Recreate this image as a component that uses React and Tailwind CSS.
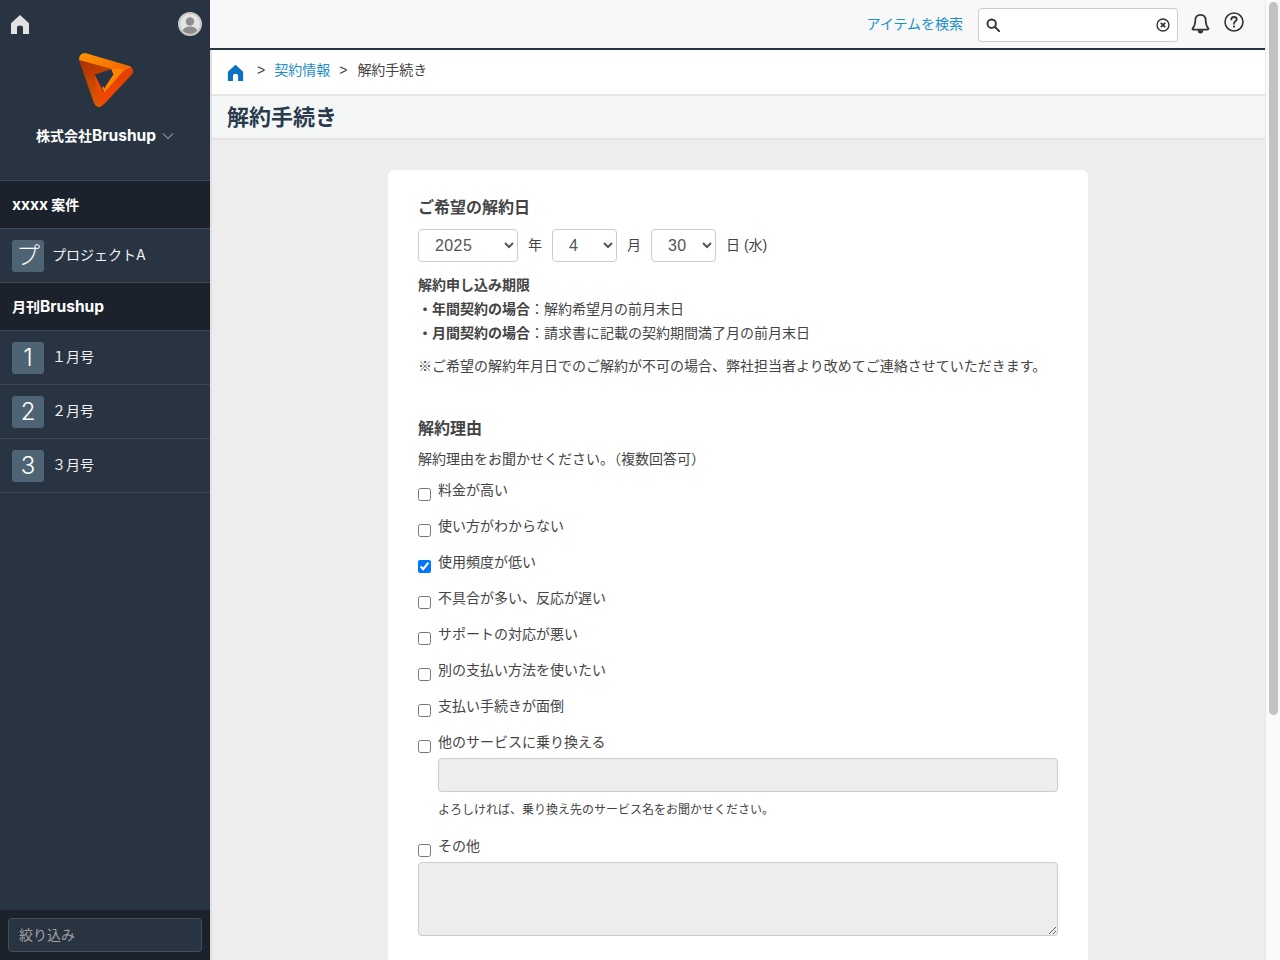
import React from "react";

const font = { fontFamily: '"Liberation Sans","Noto Sans CJK JP",sans-serif' };
const sideFont = { fontFamily: 'Inter,"Noto Sans CJK JP",sans-serif' };

function Home({ className }) {
  return (
    <svg viewBox="0 0 20 20" className={className} fill="currentColor">
      <path d="M10 1 L19 9.2 V20 H13 V13.5 Q13 11.5 10 11.5 Q7 11.5 7 13.5 V20 H1 V9.2 Z" />
    </svg>
  );
}

function Logo() {
  return (
    <svg viewBox="0 0 192 192" className="w-[64px] h-[64px]">
      <defs>
        <linearGradient id="a" x1="0" y1="0" x2="1" y2="0.3">
          <stop offset="0" stopColor="#ff9400" />
          <stop offset="1" stopColor="#f56a00" />
        </linearGradient>
        <linearGradient id="b" x1="0.2" y1="0" x2="0.5" y2="1">
          <stop offset="0" stopColor="#b23000" />
          <stop offset="1" stopColor="#dc5c00" />
        </linearGradient>
        <linearGradient id="c" x1="1" y1="0" x2="0" y2="1">
          <stop offset="0" stopColor="#e23c00" />
          <stop offset="1" stopColor="#f24c00" />
        </linearGradient>
      </defs>
      <g transform="matrix(1.052 0 0 1.11 -4 -6)">
        <path d="M62 76 L88 125 L150 62 L165 56 Q178 66 170 76 L92 155 Q78 170 66 160 Z" fill="url(#c)" />
        <path d="M18 38 L110 62 L62 78 L80 164 Q66 168 60 152 Z" fill="url(#b)" />
        <path d="M18 38 Q18 19 36 19 L162 54 Q168 56 166 59 L150 64 L110 62 Z" fill="url(#a)" />
        <path d="M110 62 L150 62 L90 126 L84 113 L116 77 Z" fill="#ff8400" />
        <path d="M116 77 L80 88 L90 115 Z" fill="#293442" />
      </g>
    </svg>
  );
}

function SectionRow({ children }) {
  return (
    <div className="h-[48px] flex items-center pl-3 bg-[#1c222c] border-t border-[#3c4855] text-white text-[14px] font-bold" style={sideFont}>
      {children}
    </div>
  );
}

function NavRow({ glyph, label }) {
  return (
    <div className="h-[54px] flex items-center pl-3 gap-[8px] border-t border-[#3c4855] text-[#f2f2f2] text-[14px]" style={sideFont}>
      <span className="w-[32px] h-[32px] rounded-[3px] bg-[#4e6373] text-white text-[24px] leading-[32px] text-center font-light">{glyph}</span>
      <span className="mb-[2px]">{label}</span>
    </div>
  );
}

function Sel({ value, w }) {
  return (
    <select
      defaultValue={value}
      className={`${w} h-[33px] pl-[12px] bg-white border border-[#ccc] rounded-[4px] text-[16px] tracking-[0.4px] text-[#555] pb-[1px]`}
    >
      <option>{value}</option>
    </select>
  );
}

function Check({ label, checked }) {
  return (
    <label className="flex items-start gap-[7px] h-[36px] text-[14px] leading-[20px] text-[#444]">
      <input type="checkbox" defaultChecked={checked} className="w-[13px] h-[13px] mt-[8px] ml-0 shrink-0" />
      <span>{label}</span>
    </label>
  );
}

export default function App() {
  return (
    <div className="flex w-[1280px] h-[960px] overflow-hidden bg-[#ededed]" style={font}>
      <aside className="w-[210px] shrink-0 h-full flex flex-col bg-[#293442]">
        <div className="h-[180px] shrink-0 relative flex flex-col items-center">
          <div className="w-full flex items-center justify-between pl-[10px] pr-[8px] h-[48px] text-[#e2e2e2]">
            <Home className="w-[20px] h-[20px]" />
            <span className="w-[24px] h-[24px] rounded-full border-2 border-[#c8c8c8] bg-[#e4e4e4] overflow-hidden flex items-center justify-center">
              <svg viewBox="0 0 20 20" className="w-[20px] h-[20px]" fill="#8e8e8e">
                <circle cx="10" cy="7.5" r="4.2" />
                <path d="M2 20 Q2 12.5 10 12.5 Q18 12.5 18 20 Z" />
              </svg>
            </span>
          </div>
          <div className="ml-[2px]"><Logo /></div>
          <div className="mt-[14px] flex items-center gap-[6px] text-white text-[14px] font-bold leading-[20px]" style={sideFont}>
            <span>株式会社<span className="text-[15.5px]">Brushup</span></span>
            <svg viewBox="0 0 12 8" className="w-[12px] h-[8px]" fill="none" stroke="#c8ccd0" strokeWidth="1">
              <path d="M1 1.5 L6 6.5 L11 1.5" />
            </svg>
          </div>
        </div>
        <SectionRow><span><span className="text-[15.5px]">xxxx</span> 案件</span></SectionRow>
        <NavRow glyph="プ" label="プロジェクトA" />
        <SectionRow><span>月刊<span className="text-[15.5px]">Brushup</span></span></SectionRow>
        <NavRow glyph="1" label="１月号" />
        <NavRow glyph="2" label="２月号" />
        <NavRow glyph="3" label="３月号" />
        <div className="border-t border-[#3c4855] flex-1" />
        <div className="h-[50px] shrink-0 bg-[#1c222c] px-[8px] pt-[8px]">
          <div className="h-[34px] rounded-[4px] border border-[#454f5b] bg-[#293442] pl-[10px] flex items-center text-[14px] text-[#a0a0a0]">
            絞り込み
          </div>
        </div>
      </aside>

      <main className="w-[1055px] shrink-0 h-full flex flex-col border-l-2 border-[#e0e0e0]">
        <header className="h-[50px] shrink-0 -ml-[2px] bg-[#f8f8f8] border-b-2 border-[#293442] flex items-center justify-end pr-[21px]">
          <span className="text-[14px] text-[#1c8fc9] mr-[15px]">アイテムを検索</span>
          <div className="w-[200px] h-[34px] mt-[2px] bg-white border border-[#ccc] rounded-[4px] flex items-center justify-between pl-[7px] pr-[7px]">
            <svg viewBox="0 0 16 16" className="w-[14px] h-[14px]" fill="none" stroke="#333" strokeWidth="2.2">
              <circle cx="6.5" cy="6.5" r="4.8" />
              <path d="M10 10 L15 15" strokeLinecap="round" />
            </svg>
            <svg viewBox="0 0 16 16" className="w-[14px] h-[14px]" fill="none" stroke="#333">
              <circle cx="8" cy="8" r="6.8" strokeWidth="1.6" />
              <path d="M5.5 5.5 L10.5 10.5 M10.5 5.5 L5.5 10.5" strokeWidth="2" />
            </svg>
          </div>
          <svg viewBox="0 0 20 22" className="w-[19px] h-[21px] ml-[13px] mb-[1px]" fill="none" stroke="#333" strokeWidth="1.8">
            <path d="M10 2 Q15.5 2 15.5 8 Q15.5 13 18.5 16.5 Q18.5 17.5 17 17.5 H3 Q1.5 17.5 1.5 16.5 Q4.5 13 4.5 8 Q4.5 2 10 2 Z" strokeLinejoin="round" />
            <path d="M8 18 Q8 20.5 10 20.5 Q12 20.5 12 18" fill="#333" />
          </svg>
          <svg viewBox="0 0 20 20" className="w-[20px] h-[20px] ml-[14px] mb-[4px]" fill="none" stroke="#333">
            <circle cx="10" cy="10" r="9" strokeWidth="1.6" />
            <path d="M7.3 7.6 Q7.3 5 10 5 Q12.7 5 12.7 7.3 Q12.7 8.7 11.2 9.5 Q10 10.2 10 11.8" strokeWidth="1.8" strokeLinecap="round" />
            <circle cx="10" cy="14.6" r="1.1" fill="#333" stroke="none" />
          </svg>
        </header>
        <div className="h-[46px] shrink-0 bg-white border-b-2 border-[#e6e6e6] flex items-center pl-[15px] text-[14px] text-[#444] pb-[3px]">
          <Home className="w-[17px] h-[17px] text-[#0a70c2] mt-[3px]" />
          <span className="ml-[13px] text-[14px]">&gt;</span>
          <span className="ml-[9px] text-[#1c8fc9]">契約情報</span>
          <span className="ml-[9px] text-[14px]">&gt;</span>
          <span className="ml-[10px]">解約手続き</span>
        </div>
        <div className="h-[44px] shrink-0 bg-[#f5f7f7] border-b-2 border-[#e3e3e3] flex items-center pl-[15px] text-[22px] font-bold text-[#2a3b4d]">
          解約手続き
        </div>
        <div className="flex-1 min-h-0 overflow-hidden flex justify-center pt-[30px] pr-[1px]">
          <section className="w-[700px] h-[900px] bg-white rounded-[6px] px-[30px] pt-[26px] text-[#444]">
            <h2 className="text-[16px] leading-[22px] pt-[1px] font-bold text-[#444]">ご希望の解約日</h2>
            <div className="flex items-center mt-[10px] text-[14px]">
              <Sel value="2025" w="w-[100px]" />
              <span className="ml-[10px] mr-[10px] -mt-[1px]">年</span>
              <Sel value="4" w="w-[65px]" />
              <span className="ml-[10px] mr-[10px] -mt-[1px]">月</span>
              <Sel value="30" w="w-[65px]" />
              <span className="ml-[10px] -mt-[1px]">日 (水)</span>
            </div>
            <div className="mt-[11px] text-[14px] leading-[24px]">
              <p className="font-bold">解約申し込み期限</p>
              <p><b>・年間契約の場合</b>：解約希望月の前月末日</p>
              <p><b>・月間契約の場合</b>：請求書に記載の契約期間満了月の前月末日</p>
            </div>
            <p className="mt-[9px] text-[14px] leading-[24px]">※ご希望の解約年月日でのご解約が不可の場合、弊社担当者より改めてご連絡させていただきます。</p>
            <h2 className="mt-[40px] text-[16px] leading-[22px] font-bold">解約理由</h2>
            <p className="mt-[8px] text-[14px] leading-[22px]">解約理由をお聞かせください。（複数回答可）</p>
            <div className="mt-[10px]">
              <Check label="料金が高い" />
              <Check label="使い方がわからない" />
              <Check label="使用頻度が低い" checked />
              <Check label="不具合が多い、反応が遅い" />
              <Check label="サポートの対応が悪い" />
              <Check label="別の支払い方法を使いたい" />
              <Check label="支払い手続きが面倒" />
              <label className="flex items-start gap-[7px] h-[20px] text-[14px] leading-[20px]">
                <input type="checkbox" className="w-[13px] h-[13px] mt-[8px] ml-0 shrink-0" />
                <span>他のサービスに乗り換える</span>
              </label>
              <div className="ml-[20px]">
                <input disabled className="block w-[620px] h-[34px] mt-[6px] rounded-[4px] border border-[#ccc] bg-[#ededed]" />
                <p className="mt-[9px] text-[12px] leading-[18px]">よろしければ、乗り換え先のサービス名をお聞かせください。</p>
              </div>
              <label className="flex items-start gap-[7px] h-[20px] mt-[17px] text-[14px] leading-[20px]">
                <input type="checkbox" className="w-[13px] h-[13px] mt-[8px] ml-0 shrink-0" />
                <span>その他</span>
              </label>
              <textarea disabled className="block w-[640px] h-[74px] mt-[6px] rounded-[4px] border border-[#ccc] bg-[#ededed]" />
            </div>
          </section>
        </div>
      </main>

      <div className="w-[15px] shrink-0 h-full bg-[#fafafa] border-l border-[#e8e8e8] pl-[3px] pr-[2px] pt-[2px]">
        <div className="w-[9px] h-[713px] rounded-full bg-[#c2c2c2]" />
      </div>
    </div>
  );
}
